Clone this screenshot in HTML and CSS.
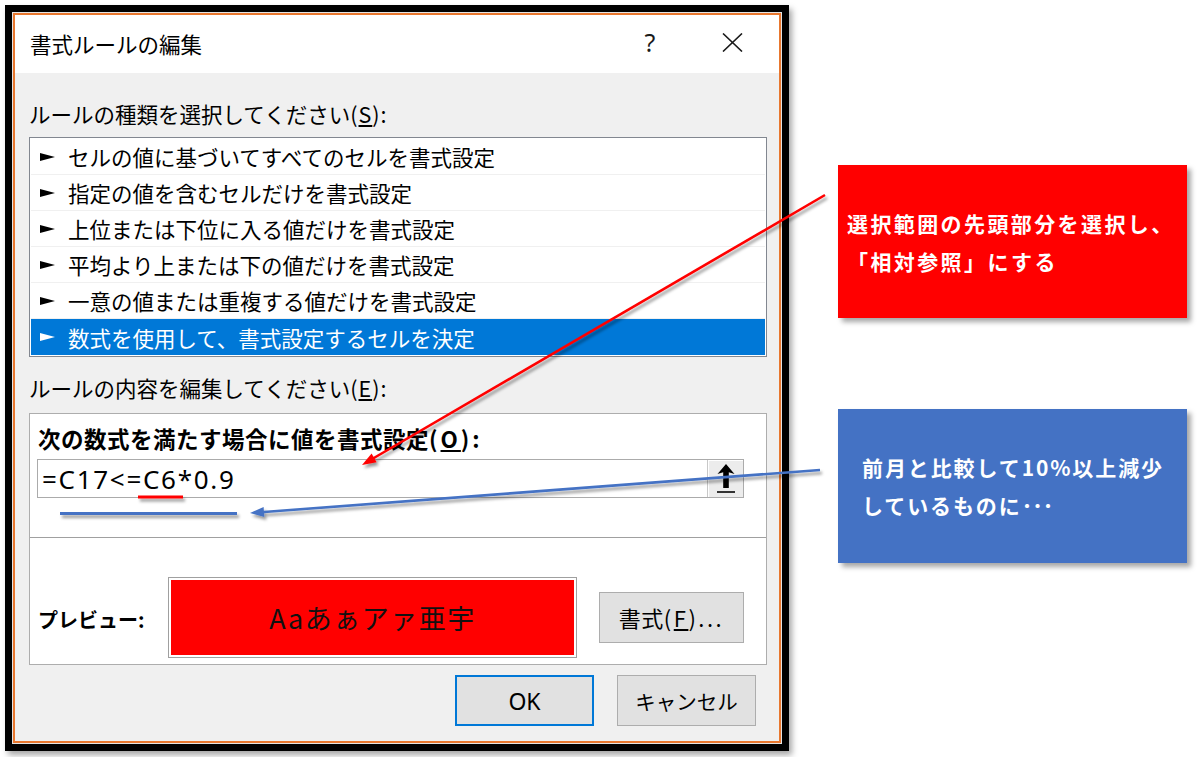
FILE: index.html
```html
<!DOCTYPE html>
<html lang="ja">
<head>
<meta charset="utf-8">
<title>書式ルールの編集</title>
<link rel="stylesheet" href="styles.css">
</head>
<body>
<div class="page">
  <div class="frame">
    <div class="dialog">
      <div class="titlebar">
        <span class="title">書式ルールの編集</span>
        <span class="help">?</span>
        <span class="close"><svg width="21" height="19" viewBox="0 0 21 19"><path d="M1 0.5 L20 18.5 M20 0.5 L1 18.5" stroke="#1a1a1a" stroke-width="1.6" fill="none"/></svg></span>
      </div>
      <div class="body">
        <div class="label l1">ルールの種類を選択してください<span class="acc">(<u>S</u>):</span></div>
        <div class="list">
          <div class="row">セルの値に基づいてすべてのセルを書式設定</div>
          <div class="row">指定の値を含むセルだけを書式設定</div>
          <div class="row">上位または下位に入る値だけを書式設定</div>
          <div class="row">平均より上または下の値だけを書式設定</div>
          <div class="row">一意の値または重複する値だけを書式設定</div>
          <div class="row selected">数式を使用して、書式設定するセルを決定</div>
        </div>
        <div class="label l2">ルールの内容を編集してください<span class="acc">(<u>E</u>):</span></div>
        <div class="panel">
          <div class="panel-top">
            <div class="bold-label">次の数式を満たす場合に値を書式設定<span class="acc">(<u>O</u>):</span></div>
            <div class="input">
              <span class="formula">=C17&lt;=C6*0.9</span>
              <span class="ref-btn"><svg width="20" height="31" viewBox="0 0 20 31"><path d="M10 1 L18.5 11 L12.8 9.2 L12.8 25 L7.2 25 L7.2 9.2 L1.5 11 Z" fill="#000"/><rect x="1" y="28" width="18" height="2" fill="#333"/></svg></span>
            </div>
          </div>
          <div class="panel-bottom">
            <div class="pv-label">プレビュー:</div>
            <div class="preview"><div class="preview-inner">Aaあぁアァ亜宇</div></div>
            <div class="btn fmt">書式<span class="acc">(<u>F</u>)...</span></div>
          </div>
        </div>
        <div class="actions">
          <div class="btn ok">OK</div>
          <div class="btn cancel">キャンセル</div>
        </div>
      </div>
    </div>
  </div>
  <div class="notes">
    <div class="callout red">
      <p>選択範囲の先頭部分を選択し、</p>
      <p>「相対参照」にする</p>
    </div>
    <div class="callout blue">
      <p>前月と比較して10%以上減少</p>
      <p>しているものに<span class="dots">･･･</span></p>
    </div>
  </div>
  <svg class="overlay" width="1200" height="757" viewBox="0 0 1200 757">
    <defs>
      <filter id="sh" x="-5%" y="-20%" width="110%" height="160%">
        <feDropShadow dx="2" dy="3" stdDeviation="1.6" flood-color="#000" flood-opacity="0.4"/>
      </filter>
    </defs>
    <g filter="url(#sh)">
      <line x1="138" y1="497" x2="183" y2="497" stroke="#ff0000" stroke-width="3"/>
      <line x1="60" y1="513.5" x2="237" y2="513.5" stroke="#4472c4" stroke-width="3"/>
      <line x1="825" y1="195" x2="373" y2="458.5" stroke="#ff0000" stroke-width="2.6"/>
      <polygon points="362,465 371.6,453.6 376.6,462.2" fill="#ff0000"/>
      <line x1="820" y1="470" x2="264" y2="512" stroke="#4472c4" stroke-width="2.6"/>
      <polygon points="250,513 263.6,507 264.4,517" fill="#4472c4"/>
    </g>
  </svg>
</div>
</body>
</html>
```
FILE: styles.css
```css
html, body {
  margin: 0;
  padding: 0;
  background: #fff;
}

body {
  font-family: "Noto Sans CJK JP", "Noto Sans", sans-serif;
  color: #000;
}

.page {
  position: relative;
  width: 1200px;
  height: 757px;
  box-sizing: border-box;
  padding: 5px 0 0 5px;
  display: flex;
  align-items: flex-start;
  overflow: hidden;
}

.frame {
  width: 784px;
  height: 746px;
  box-sizing: border-box;
  border: 7px solid #000;
  padding: 1px;
  background: #e4e4e4;
  box-shadow: 3px 4px 6px rgba(0, 0, 0, 0.35);
  flex: none;
}

.dialog {
  height: 100%;
  box-sizing: border-box;
  border: 2px solid #e8772e;
  background: #f0f0f0;
  display: flex;
  flex-direction: column;
}

.titlebar {
  height: 58px;
  background: #fff;
  display: flex;
  align-items: center;
  padding-left: 15px;
  font-size: 21.5px;
  flex: none;
}

.title {
  flex: 1;
  position: relative;
  top: -1px;
}

.help {
  width: 30px;
  text-align: center;
  font-family: "Noto Sans", sans-serif;
  font-size: 25px;
  color: #1a1a1a;
  margin-right: 57px;
  position: relative;
  top: -2px;
}

.close {
  width: 21px;
  height: 19px;
  margin-right: 36px;
  display: flex;
  position: relative;
  top: -2px;
}

.body {
  padding: 0 12px 0 14px;
  display: flex;
  flex-direction: column;
}

.label {
  font-size: 21.5px;
  line-height: 30px;
  white-space: nowrap;
}

.acc {
  letter-spacing: 1px;
}

.l1 {
  margin-top: 26px;
}

.list {
  margin-top: 8px;
  height: 220px;
  box-sizing: border-box;
  border: 1px solid #828790;
  background: #fff;
  padding: 1px;
}

.row {
  height: 36px;
  box-sizing: border-box;
  border-bottom: 1px solid #f0f0f0;
  display: flex;
  align-items: center;
  padding-left: 9px;
  font-size: 21.5px;
  white-space: nowrap;
}

.row::before {
  content: "";
  width: 0;
  height: 0;
  border-left: 15px solid #000;
  border-top: 4.5px solid transparent;
  border-bottom: 4.5px solid transparent;
  margin-right: 13px;
  flex: none;
}

.row.selected {
  background: #0078d7;
  color: #fff;
  border-bottom: none;
}

.row.selected::before {
  border-left-color: #fff;
}

.l2 {
  margin-top: 16px;
}

.panel {
  margin-top: 10px;
  height: 252px;
  box-sizing: border-box;
  border: 1px solid #adadad;
  background: #fff;
  display: flex;
  flex-direction: column;
}

.panel-top {
  padding: 9px 22px 0 7px;
  height: 124px;
  box-sizing: border-box;
  border-bottom: 1px solid #a0a0a0;
}

.bold-label {
  font-size: 22.5px;
  font-weight: 700;
  line-height: 30px;
  letter-spacing: 0.5px;
  padding-left: 1px;
  white-space: nowrap;
}

.bold-label .acc {
  letter-spacing: 3px;
}

.input {
  margin-top: 6px;
  height: 39px;
  box-sizing: border-box;
  border: 1px solid #ababab;
  display: flex;
  align-items: center;
}

.formula {
  flex: 1;
  padding-left: 4px;
  font-family: "Noto Sans", sans-serif;
  font-size: 26px;
  letter-spacing: 1.7px;
}

.ref-btn {
  width: 36px;
  height: 100%;
  box-sizing: border-box;
  border-left: 1px solid #c8c8c8;
  background: #ececec;
  box-shadow: inset 1px 1px 0 #fff;
  display: flex;
  align-items: center;
  justify-content: center;
}

.panel-bottom {
  flex: 1;
  display: flex;
  align-items: center;
  padding: 32px 0 0 8px;
}

.pv-label {
  width: 130px;
  font-size: 20px;
  font-weight: 700;
  white-space: nowrap;
  position: relative;
  top: 2px;
}

.preview {
  width: 409px;
  height: 81px;
  box-sizing: border-box;
  border: 1px solid #a0a0a0;
  padding: 2px;
  background: #fff;
}

.preview-inner {
  height: 100%;
  background: #ff0000;
  display: flex;
  align-items: center;
  justify-content: center;
  font-size: 27px;
  letter-spacing: 1.5px;
  color: #111;
}

.btn {
  display: flex;
  align-items: center;
  justify-content: center;
  box-sizing: border-box;
  background: #e1e1e1;
  border: 1px solid #adadad;
  white-space: nowrap;
}

.fmt {
  margin-left: 22px;
  width: 145px;
  height: 51px;
  font-size: 22px;
  letter-spacing: 0.5px;
}

.fmt .acc {
  letter-spacing: 2.5px;
}

.actions {
  margin-top: 10px;
  display: flex;
  justify-content: flex-end;
  gap: 23px;
  padding-right: 11px;
}

.ok, .cancel {
  width: 139px;
  height: 51px;
}

.ok {
  border: 2px solid #0078d7;
  font-family: "Noto Sans", sans-serif;
  font-size: 23px;
}

.cancel {
  font-size: 20.5px;
}

.notes {
  margin-left: 49px;
  margin-top: 160px;
  display: flex;
  flex-direction: column;
}

.callout {
  width: 349px;
  height: 153px;
  box-sizing: border-box;
  display: flex;
  flex-direction: column;
  justify-content: center;
  color: #fff;
  font-weight: 700;
  font-size: 21px;
  letter-spacing: 2.4px;
  box-shadow: 4px 4px 5px rgba(0, 0, 0, 0.35);
}

.callout p {
  margin: 0;
  line-height: 38px;
  white-space: nowrap;
}

.red {
  background: #ff0000;
  padding-left: 9px;
}

.blue {
  background: #4472c4;
  padding-left: 24px;
  margin-top: 91px;
  height: 154px;
  letter-spacing: 1.9px;
}

.dots {
  letter-spacing: 0;
}

.overlay {
  position: absolute;
  left: 0;
  top: 0;
  pointer-events: none;
}
```
